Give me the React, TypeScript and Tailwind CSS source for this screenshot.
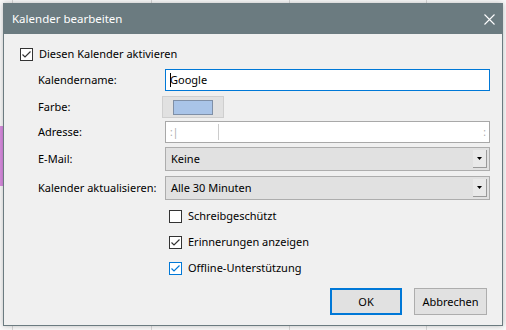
const font = { fontFamily: '"Noto Sans", "Liberation Sans", sans-serif' };

function Check({ checked, blue }: { checked?: boolean; blue?: boolean }) {
	return (
		<span
			className={`flex h-[13px] w-[13px] shrink-0 items-center justify-center border bg-white ${
				blue ? 'border-[#0078d7]' : 'border-[#333]'
			}`}
		>
			{checked && (
				<svg width="11" height="11" viewBox="0 0 11 11">
					<path d="M1.5 5.5 L4 8 L9.5 2.5" fill="none" stroke={blue ? '#0078d7' : '#333'} strokeWidth="1.2" />
				</svg>
			)}
		</span>
	);
}

function Select({ value }: { value: string }) {
	return (
		<div className="flex h-[24px] flex-1 items-center border border-[#adadad] bg-[#e1e1e1] pr-[2px] pl-[5px]">
			<span className="flex-1">{value}</span>
			<span className="flex h-[18px] w-[14px] items-center justify-center border-r border-b border-[#9a9a9a] bg-[#e9e9e9]">
				<svg width="5" height="3" viewBox="0 0 5 3">
					<path d="M0 0 H5 L2.5 3 Z" fill="#000" />
				</svg>
			</span>
		</div>
	);
}

function Row({ label, children }: { label: string; children: React.ReactNode }) {
	return (
		<div className="flex items-center">
			<span className="w-[127px] shrink-0 whitespace-nowrap">{label}</span>
			{children}
		</div>
	);
}

export default function App() {
	return (
		<div
			className="relative h-[330px] w-[506px] overflow-hidden bg-[#fafafa] text-[11px] leading-[16px] text-black"
			style={font}
		>
			{/* calendar behind */}
			<div className="flex h-full">
				<div className="w-[13px] border-r border-[#d8d8d8]" />
				<div className="w-[139px] border-r border-[#d8d8d8]" />
				<div className="w-[138px] border-r border-[#d8d8d8]" />
				<div className="w-[137px] border-r border-[#d8d8d8]" />
			</div>
			<div className="absolute top-[126px] left-0 h-[60px] w-[3px] bg-[#d98ce0]" />

			{/* dialog */}
			<div className="absolute top-[3px] left-[3px] flex h-[323px] w-[500px] flex-col border border-[#6b7b80] bg-[#f0f0f0] shadow-[0_0_6px_rgba(0,0,0,0.25)]">
				<div className="flex h-[30px] shrink-0 items-center justify-between bg-[#6b7b80] pr-[7px] pl-[8px] text-white">
					<span className="text-[11.5px]">Kalender bearbeiten</span>
					<svg width="11" height="11" viewBox="0 0 11 11">
						<path d="M0.5 0.5 L10.5 10.5 M10.5 0.5 L0.5 10.5" stroke="#fff" strokeWidth="1.1" />
					</svg>
				</div>

				<div className="flex flex-1 flex-col pt-[12px] pr-[12px] pl-[16px]">
					<label className="flex items-center gap-[6px]">
						<Check checked />
						<span>Diesen Kalender aktivieren</span>
					</label>

					<div className="mt-[7px] flex flex-col pl-[18px]">
						<Row label="Kalendername:">
							<div className="flex h-[22px] flex-1 items-center border border-[#0078d7] bg-white pl-[4px]">
								<span className="mr-[-1px] h-[14px] w-px bg-black" />
								Google
							</div>
						</Row>
						<div className="mt-[5px]">
							<Row label="Farbe:">
								<div className="-ml-[3px] flex h-[22px] w-[62px] items-center justify-center border border-[#cfcfcf] bg-[#e1e1e1]">
									<span className="h-[15px] w-[40px] border border-[#7f8fa6] bg-[#a9c4e8]" />
								</div>
							</Row>
						</div>
						<div className="mt-[3px]">
							<Row label="Adresse:">
								<div className="flex h-[22px] flex-1 items-center border border-[#a8a8a8] bg-white pr-[3px] pl-[4px] text-[#aaa]">
									<span className="text-[10px]">:|</span>
									<span className="ml-[40px] h-[16px] w-px bg-[#ccc]" />
									<span className="flex-1" />
									<span className="text-[10px]">:</span>
								</div>
							</Row>
						</div>
						<div className="mt-[4px]">
							<Row label="E-Mail:">
								<Select value="Keine" />
							</Row>
						</div>
						<div className="mt-[5px]">
							<Row label="Kalender aktualisieren:">
								<Select value="Alle 30 Minuten" />
							</Row>
						</div>
					</div>

					<div className="mt-[8px] flex flex-col gap-[10px] pl-[149px]">
						<label className="flex items-center gap-[6px]">
							<Check />
							<span>Schreibgeschützt</span>
						</label>
						<label className="flex items-center gap-[6px]">
							<Check checked />
							<span>Erinnerungen anzeigen</span>
						</label>
						<label className="flex items-center gap-[6px]">
							<Check checked blue />
							<span>Offline-Unterstützung</span>
						</label>
					</div>

					<div className="mt-[12px] flex justify-end gap-[12px] pr-[3px]">
						<button className="h-[27px] w-[72px] border-2 border-[#0078d7] bg-[#e1e1e1]">OK</button>
						<button className="h-[27px] w-[73px] border border-[#adadad] bg-[#e1e1e1]">Abbrechen</button>
					</div>
				</div>
			</div>
		</div>
	);
}
